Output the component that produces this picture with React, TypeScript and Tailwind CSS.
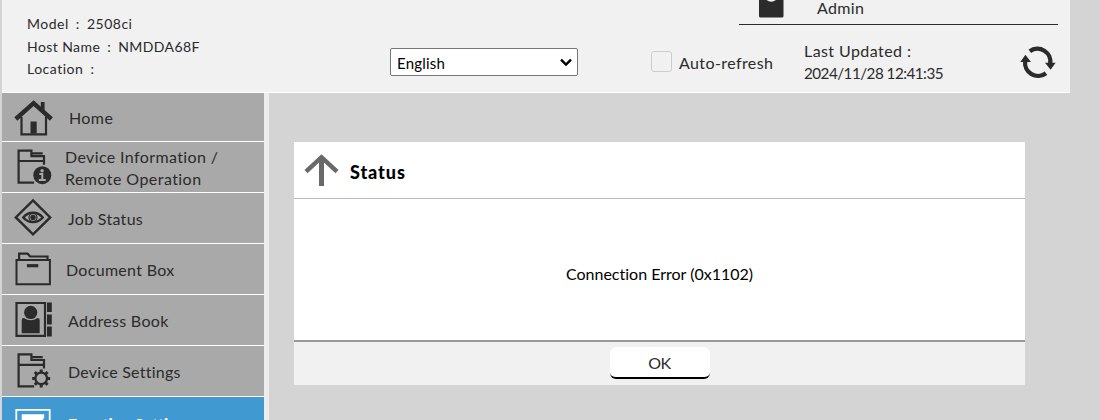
import type { ReactNode } from "react";

const dark = "#2b2b2b";

function HomeIcon() {
  return (
    <svg width="40" height="40" viewBox="0 0 40 40" fill="none" stroke={dark}>
      <path d="M1.8 22 19.6 6.2 37.4 22" strokeWidth="4.4" />
      <path d="M28.7 14V5" strokeWidth="3.8" />
      <path d="M7.5 20v17.3h24.5V20" strokeWidth="2.2" />
      <path d="M19.6 24.5v12" strokeWidth="6.2" />
    </svg>
  );
}

function FolderLines() {
  return (
    <g fill="none" stroke={dark} strokeWidth="2.2">
      <path d="M20.500 36H5V4h12.800v5.600h12.600v8.600" />
      <path d="M5 14.400h25.400M17.800 6.800h11.300" />
    </g>
  );
}

function DeviceInfoIcon() {
  return (
    <svg width="40" height="40" viewBox="0.4 0.4 40 40">
      <FolderLines />
      <circle cx="28.700" cy="28.600" r="9" fill={dark} />
      <circle cx="28.500" cy="24.200" r="1.700" fill="#a9a9a9" />
      <path d="M25.700 27.300h3v5.600M25.200 33.400h7" fill="none" stroke="#a9a9a9" strokeWidth="2" />
    </svg>
  );
}

function JobIcon() {
  return (
    <svg width="40" height="40" viewBox="0 0 40 40" fill="none" stroke={dark}>
      <path d="M19 2.400 36.200 19.400 19 36.400 1.800 19.400Z" strokeWidth="2.400" />
      <path d="M9.200 19.400C14.500 13.200 23.500 13.200 28.800 19.400 23.500 25.600 14.500 25.600 9.200 19.400Z" strokeWidth="2.300" />
      <circle cx="19" cy="19.400" r="4" strokeWidth="1.200" />
      <circle cx="19" cy="19.400" r="2.700" fill={dark} stroke="none" />
    </svg>
  );
}

function BoxIcon() {
  return (
    <svg width="40" height="40" viewBox="1.9 0.6 40 40" fill="none" stroke={dark}>
      <path d="M4.400 11.600h33.400v24.200H4.400Z" strokeWidth="2" />
      <path d="M7 11.500V5.300h8.500l2.500 2.800h17.400v3" strokeWidth="2.200" />
      <path d="M14.800 17.300h11.400" strokeWidth="3.200" />
    </svg>
  );
}

function BookIcon() {
  return (
    <svg width="40" height="40" viewBox="0 0.600 40 40" fill={dark}>
      <path d="M2.500 3.600h28.500v32.800H2.500Z" fill="none" stroke={dark} strokeWidth="2.200" />
      <ellipse cx="16.700" cy="13" rx="6.600" ry="6.700" />
      <path d="M7.700 33.800V20.500q0-2 2.200-2 6.800 4.500 13.600 0 2.200 0 2.200 2v13.300Z" />
      <path d="M33 3h4.800v9.600H33ZM33 15h4.800v10H33ZM33 27.200h4.800V37H33Z" />
    </svg>
  );
}

function SettingsIcon() {
  return (
    <svg width="40" height="40" viewBox="0.400 0.600 40 40">
      <FolderLines />
      <circle cx="27.600" cy="28" r="5.800" fill="none" stroke={dark} strokeWidth="2.300" />
      <path
        d="M27.600 19v3M27.600 34v3M18.600 28h3M33.600 28h3M21.200 21.600l2.200 2.200M31.800 32.200l2.200 2.200M21.200 34.400l2.200-2.200M31.800 23.800l2.200-2.200"
        fill="none"
        stroke={dark}
        strokeWidth="3"
      />
    </svg>
  );
}

function FunctionIcon() {
  return (
    <svg width="40" height="40" viewBox="0 0 40 40">
      <path d="M2.300 6.800h33.400v30H2.300Z" fill="none" stroke="#fff" strokeWidth="1.800" />
      <path d="M7.700 11.300h22.500v3.200l-5.500 8.500h-17Z" fill="#fff" />
    </svg>
  );
}

function RefreshIcon() {
  return (
    <svg width="36" height="34" viewBox="0 0 36 34">
      <g fill="none" stroke={dark} strokeWidth="4.300">
        <path d="M9.800 5.200A13 13 0 0 1 30.200 18" />
        <path d="M26 27.200A13 13 0 0 1 5.200 15" />
      </g>
      <path d="M25 16.700h10.600L30.600 23.700ZM.3 16H11L5.400 8.800Z" fill={dark} />
    </svg>
  );
}

type ItemProps = { icon: ReactNode; label: ReactNode; pad: string; height?: string };

function Item({ icon, label, pad, height = "h-[51px]" }: ItemProps) {
  return (
    <li className={`flex shrink-0 items-center border-b border-white bg-[#a9a9a9] pl-3 ${height}`}>
      {icon}
      <span className={`text-[16px] leading-[22px] text-[#2b2b2b] ${pad}`}>{label}</span>
    </li>
  );
}

export default function App() {
  return (
    <div className="h-[420px] w-[1100px] overflow-hidden bg-[#d4d4d4] pl-[2px] font-['Lato','Liberation_Sans',sans-serif] text-[#2b2b2b] [font-variant-ligatures:none]">
      <header className="flex h-[93px] w-[1068px] border-b border-white bg-[#f1f1f1]">
        <div className="w-[388px] pt-[13px] pl-[25px] text-[14px] leading-[22.7px] whitespace-pre">
          <p className="tracking-[0.5px]">Model<span className="px-[3px]"> : </span>2508ci</p>
          <p className="tracking-[0.42px]">Host Name<span className="px-[3px]"> : </span>NMDDA68F</p>
          <p className="tracking-[0.5px]">Location<span className="px-[3px]"> :</span></p>
        </div>
        <div className="w-[261px] pt-12">
          <div className="flex h-7 w-[188px] items-center justify-between rounded-[2px] border border-[#767676] bg-white pr-[5px] pl-[6px] text-black">
            <span className="pt-[2px] text-[15px] tracking-[0.2px]">English</span>
            <svg width="12" height="8" viewBox="0 0 12 8" fill="none" stroke="black" strokeWidth="2.4">
              <path d="M1 1.6 6 6.6 11 1.6" />
            </svg>
          </div>
        </div>
        <div className="flex w-[88px] shrink-0 items-start pt-[51px]">
          <span className="h-[21px] w-[21px] shrink-0 rounded-[3px] border border-[#cdcdcd]" />
          <span className="pt-px pl-[7px] text-[16px] leading-[21px] tracking-[0.4px] whitespace-nowrap">Auto-refresh</span>
        </div>
        <div className="w-[319px]">
          <div className="flex h-[25px] border-b border-[#2b2b2b] pl-5">
            <svg width="25" height="18" viewBox="0 0 25 18">
              <path d="M0 0h7.500q4.700 3.400 9.500 0h7.500V16q0 1.500-1.500 1.500H1.500Q0 17.500 0 16Z" fill={dark} />
            </svg>
            <span className="pl-[33px] text-[16px] leading-[16px] tracking-[0.35px]">Admin</span>
          </div>
          <div className="flex pl-[65px]">
            <div className="w-[216px] pt-[14px] text-[16px] leading-[23px]">
              <p className="tracking-[0.42px]">Last Updated :</p>
              <p className="tracking-[-0.5px] text-[15.2px]">2024/11/28 12:41:35</p>
            </div>
            <div className="pt-[21px]"><RefreshIcon /></div>
          </div>
        </div>
      </header>
      <div className="flex h-[327px]">
        <nav className="w-[267px] shrink-0 border-r-[5px] border-[#ededed] bg-[#a9a9a9]">
          <ul className="flex h-full flex-col overflow-hidden">
            <Item height="h-[49px]" icon={<HomeIcon />} pad="pl-[15px] pt-[2px] tracking-[0.4px]" label="Home" />
            <Item
              icon={<DeviceInfoIcon />}
              pad="pl-[11px] pt-[2px]"
              label={
                <>
                  <span className="block tracking-[0.38px]">Device Information /</span>
                  <span className="block tracking-[0.44px]">Remote Operation</span>
                </>
              }
            />
            <Item icon={<JobIcon />} pad="pl-[14px] pt-px tracking-[0.3px]" label="Job Status" />
            <Item icon={<BoxIcon />} pad="pl-[12px] pt-px tracking-[0.3px]" label="Document Box" />
            <Item icon={<BookIcon />} pad="pl-[14px] pt-px tracking-[0.3px]" label="Address Book" />
            <Item icon={<SettingsIcon />} pad="pl-[14px] pt-px tracking-[0.25px]" label="Device Settings" />
            <li className="flex h-[51px] shrink-0 items-center bg-[#4099d1] pl-3 font-black text-white">
              <FunctionIcon />
              <span className="pt-[4px] pl-[14px] text-[16px] leading-[22px]">Function Settings</span>
            </li>
          </ul>
        </nav>
        <main className="pt-[49px] pl-[25px]">
          <section className="flex h-[243px] w-[731px] flex-col bg-white">
            <div className="flex h-[57px] items-center border-b border-[#bdbdbd] pl-[10px]">
              <svg width="35" height="34" viewBox="0 0 35 34" fill="none" stroke="#696969">
                <path d="M2 18.600 17.500 4.200 33 18.600" strokeWidth="4.500" />
                <path d="M17.500 5v28" strokeWidth="5" />
              </svg>
              <h1 className="pt-[4px] pl-[11px] text-[18px] font-black tracking-[0.9px] text-black">Status</h1>
            </div>
            <div className="flex flex-1 items-center justify-center pt-[9px] text-[16px] text-black">Connection Error (0x1102)</div>
            <div className="flex h-[45px] justify-center border-t-2 border-[#989898] bg-[#f1f1f1] pt-[5px]">
              <button className="h-8 w-[100px] rounded-[6px] border-b-2 border-black bg-white pt-[2px] text-[16px] tracking-[-0.4px]">OK</button>
            </div>
          </section>
        </main>
      </div>
    </div>
  );
}
